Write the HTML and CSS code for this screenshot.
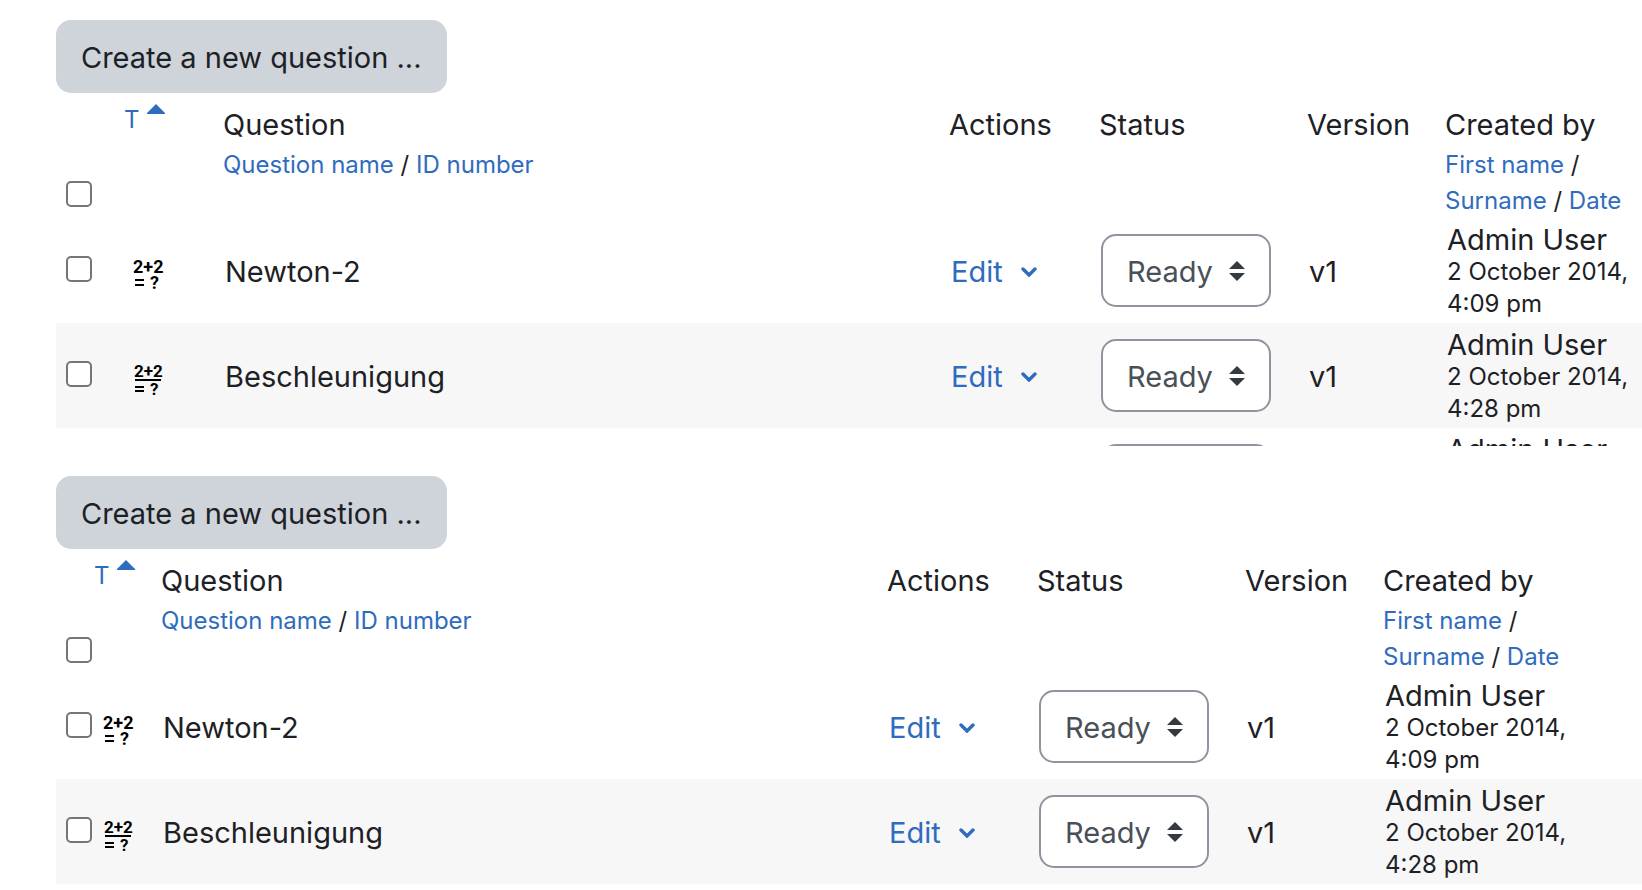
FILE: index.html
```html
<!DOCTYPE html>
<html lang="en">
<head>
<meta charset="utf-8">
<title>Question bank</title>
<link rel="stylesheet" href="styles.css">
</head>
<body>
<svg class="defs" aria-hidden="true">
  <symbol id="sort" viewBox="0 0 18 10"><path d="M9 0 18 9v1H0V9z"/></symbol>
  <symbol id="chevron" viewBox="0 0 16 10"><path d="M2 2l6 6 6-6" fill="none" stroke="currentColor" stroke-width="3.4" stroke-linecap="round"/></symbol>
  <symbol id="updown" viewBox="0 0 16 20"><path d="M8 0 16 8H0zM0 12h16L8 20z"/></symbol>
</svg>
<main>
  <section class="panel clipped">
    <button class="create" type="button">Create a new question ...</button>
    <table class="bank">
      <colgroup><col class="c-select"><col class="c-type"><col><col class="c-actions"><col class="c-status"><col class="c-version"><col class="c-created"></colgroup>
      <thead><tr>
        <th class="select"><input type="checkbox" aria-label="Select all"></th>
        <th><a class="type" href="#">T<svg class="sort"><use href="#sort"/></svg></a></th>
        <th>Question<div class="sorters"><a href="#">Question name</a> / <a href="#">ID number</a></div></th>
        <th>Actions</th><th>Status</th><th>Version</th>
        <th>Created by<div class="sorters"><a href="#">First name</a> /<br><a href="#">Surname</a> / <a href="#">Date</a></div></th>
      </tr></thead>
      <tbody>
        <tr>
          <td class="select"><input type="checkbox" aria-label="Select Newton-2"></td>
          <td><svg class="qtype" viewBox="0 0 32 40"><text x="1" y="21">2+2</text><path d="M3 27h9v2H3zM3 32h9v2H3z"/><text x="18" y="37">?</text></svg></td>
          <td>Newton-2</td>
          <td><button class="edit" type="button">Edit<svg class="chevron"><use href="#chevron"/></svg></button></td>
          <td class="state"><div class="status"><select aria-label="Status"><option>Ready</option><option>Draft</option></select><svg><use href="#updown"/></svg></div></td>
          <td>v1</td>
          <td class="created">Admin User<div class="date">2 October 2014,<br>4:09 pm</div></td>
        </tr>
        <tr>
          <td class="select"><input type="checkbox" aria-label="Select Beschleunigung"></td>
          <td><svg class="qtype simple" viewBox="0 0 32 40"><text x="2" y="20">2+2</text><path d="M3 22h26v2H3zM3 29h9v2H3zM3 33h9v2H3z"/><text x="18" y="38">?</text></svg></td>
          <td>Beschleunigung</td>
          <td><button class="edit" type="button">Edit<svg class="chevron"><use href="#chevron"/></svg></button></td>
          <td class="state"><div class="status"><select aria-label="Status"><option>Ready</option><option>Draft</option></select><svg><use href="#updown"/></svg></div></td>
          <td>v1</td>
          <td class="created">Admin User<div class="date">2 October 2014,<br>4:28 pm</div></td>
        </tr>
        <tr>
          <td></td><td></td><td></td><td></td>
          <td class="state"><div class="status"><select aria-label="Status"><option>Ready</option><option>Draft</option></select></div></td>
          <td></td>
          <td class="created">Admin User</td>
        </tr>
      </tbody>
    </table>
  </section>
  <section class="panel compact">
    <button class="create" type="button">Create a new question ...</button>
    <table class="bank">
      <colgroup><col class="c-select"><col class="c-type"><col><col class="c-actions"><col class="c-status"><col class="c-version"><col class="c-created"></colgroup>
      <thead><tr>
        <th class="select"><input type="checkbox" aria-label="Select all"></th>
        <th><a class="type" href="#">T<svg class="sort"><use href="#sort"/></svg></a></th>
        <th>Question<div class="sorters"><a href="#">Question name</a> / <a href="#">ID number</a></div></th>
        <th>Actions</th><th>Status</th><th>Version</th>
        <th>Created by<div class="sorters"><a href="#">First name</a> /<br><a href="#">Surname</a> / <a href="#">Date</a></div></th>
      </tr></thead>
      <tbody>
        <tr>
          <td class="select"><input type="checkbox" aria-label="Select Newton-2"></td>
          <td><svg class="qtype" viewBox="0 0 32 40"><text x="1" y="21">2+2</text><path d="M3 27h9v2H3zM3 32h9v2H3z"/><text x="18" y="37">?</text></svg></td>
          <td>Newton-2</td>
          <td><button class="edit" type="button">Edit<svg class="chevron"><use href="#chevron"/></svg></button></td>
          <td class="state"><div class="status"><select aria-label="Status"><option>Ready</option><option>Draft</option></select><svg><use href="#updown"/></svg></div></td>
          <td>v1</td>
          <td class="created">Admin User<div class="date">2 October 2014,<br>4:09 pm</div></td>
        </tr>
        <tr>
          <td class="select"><input type="checkbox" aria-label="Select Beschleunigung"></td>
          <td><svg class="qtype simple" viewBox="0 0 32 40"><text x="2" y="20">2+2</text><path d="M3 22h26v2H3zM3 29h9v2H3zM3 33h9v2H3z"/><text x="18" y="38">?</text></svg></td>
          <td>Beschleunigung</td>
          <td><button class="edit" type="button">Edit<svg class="chevron"><use href="#chevron"/></svg></button></td>
          <td class="state"><div class="status"><select aria-label="Status"><option>Ready</option><option>Draft</option></select><svg><use href="#updown"/></svg></div></td>
          <td>v1</td>
          <td class="created">Admin User<div class="date">2 October 2014,<br>4:28 pm</div></td>
        </tr>
      </tbody>
    </table>
  </section>
</main>
</body>
</html>
```

FILE: styles.css
```css
* { box-sizing: border-box; }
body {
  margin: 0;
  background: #fff;
  color: #1d2125;
  font-family: Inter, "Liberation Sans", sans-serif;
  font-size: 29px;
  line-height: 45px;
}
.defs { position: absolute; width: 0; height: 0; }
main { display: flex; flex-direction: column; gap: 10px; }
.panel { padding: 20px 0 0 56px; }
.clipped { max-height: 446px; overflow: hidden; }
a { color: #306cbe; text-decoration: none; }
button, select { font: inherit; cursor: pointer; }
.create {
  display: block;
  padding: 15px 25px 13px;
  border: 0;
  border-radius: 15px;
  background: #ced4da;
  color: #1d2125;
}
.bank { width: 100%; table-layout: fixed; border-collapse: collapse; }
.c-select { width: 68px; }
.c-type { width: 99px; }
.c-actions { width: 150px; }
.c-status { width: 208px; }
.c-version { width: 138px; }
.c-created { width: 197px; }
.compact .c-select { width: 38px; }
.compact .c-type { width: 67px; }
.compact .c-created { width: 259px; }
th {
  padding: 9px 0 0;
  font-weight: 400;
  text-align: left;
  vertical-align: top;
  white-space: nowrap;
}
.sorters { margin-bottom: -1px; font-size: 24px; line-height: 36px; }
.type {
  display: flex;
  align-items: flex-start;
  gap: 7px;
  font-size: 24px;
  line-height: 36px;
}
.sort { width: 18px; height: 10px; margin-top: 2px; fill: currentColor; }
td { height: 105px; padding: 2px 0 0 2px; vertical-align: middle; white-space: nowrap; }
th.select { padding: 0 0 11px 10px; vertical-align: bottom; }
td.select { padding: 0 0 4px 10px; }
td.state { padding: 0 0 0 2px; }
tbody tr:nth-child(even) { background: #f7f7f7; }
input {
  appearance: none;
  display: block;
  width: 26px;
  height: 26px;
  margin: 0;
  border: 2px solid #767676;
  border-radius: 5px;
  background: #fff;
}
.qtype {
  display: block;
  width: 32px;
  height: 40px;
  margin-left: 6px;
  font-family: Roboto, sans-serif;
  font-size: 18px;
  font-weight: 700;
  fill: #000;
}
.simple { font-size: 17px; }
.edit {
  display: flex;
  align-items: center;
  gap: 18px;
  padding: 0;
  border: 0;
  background: none;
  color: #306cbe;
}
.chevron { width: 16px; height: 10px; }
.status { position: relative; width: 170px; }
.status select {
  appearance: none;
  display: block;
  width: 100%;
  height: 73px;
  padding: 2px 24px 0;
  border: 2px solid #8f959e;
  border-radius: 15px;
  background: #fff;
  color: #495057;
}
.status svg {
  position: absolute;
  top: 27px;
  right: 26px;
  width: 16px;
  height: 20px;
  fill: #343a40;
  pointer-events: none;
}
td.created { padding-top: 5px; line-height: 34px; vertical-align: top; }
.date { margin-top: -1px; font-size: 24px; line-height: 32px; }
```
